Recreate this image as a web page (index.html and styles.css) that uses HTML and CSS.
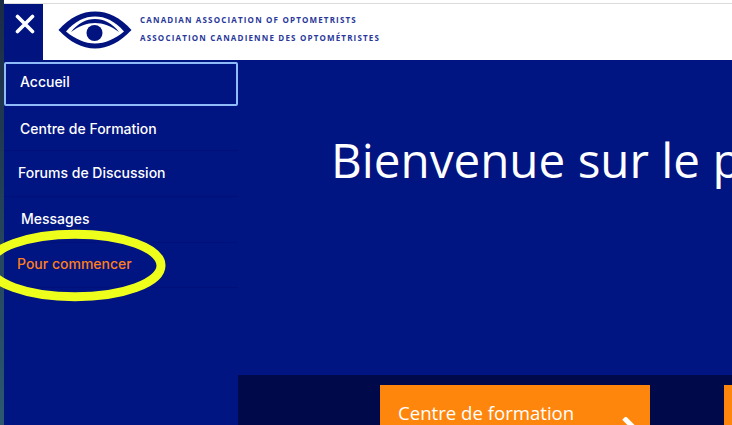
FILE: index.html
```html
<!DOCTYPE html>
<html lang="fr">
<head>
<meta charset="utf-8">
<title>Bienvenue</title>
<link rel="stylesheet" href="styles.css">
</head>
<body>
<div class="strip"></div>
<div class="app">
  <div class="topline"></div>
  <header class="header">
    <button class="close" aria-label="Fermer">
      <svg width="20" height="20" viewBox="0 0 20 20"><path d="M2.5 2.5 17.5 17.5M17.5 2.5 2.5 17.5" stroke="#fff" stroke-width="3.6" stroke-linecap="round" fill="none"/></svg>
    </button>
    <div class="brand">
      <svg class="eye" width="74" height="38" viewBox="0 0 74 38">
        <path d="M0.5 19 C12 6 24 0.5 37 0.5 C50 0.5 62 6 73.5 19 C62 31 50 37.5 37 37.5 C24 37.5 12 31 0.5 19Z" fill="#00137f"/>
        <path d="M8 20.5 C17 10 27 5.5 37 5.5 C47 5.5 57 10 66 20.5 C57 28 47 32.5 37 32.5 C27 32.5 17 28 8 20.5Z" fill="#fff"/>
        <path d="M13 21 C20 12 28 8 37 8 C46 8 54 12 61 21 C53 15 45 12 37 12 C29 12 21 15 13 21Z" fill="#00137f"/>
        <circle cx="36.5" cy="22" r="8" fill="#00137f"/>
      </svg>
      <div class="brand-text">
        <div>CANADIAN ASSOCIATION OF OPTOMETRISTS</div>
        <div>ASSOCIATION CANADIENNE DES OPTOMÉTRISTES</div>
      </div>
    </div>
  </header>
  <div class="main">
    <nav class="nav">
      <a class="item current">Accueil</a>
      <a class="item i2">Centre de Formation</a>
      <a class="item i3">Forums de Discussion</a>
      <a class="item i4">Messages</a>
      <a class="item i5 orange">Pour commencer</a>
      <svg class="ring" width="170" height="80" viewBox="0 0 170 80"><ellipse cx="75" cy="38.5" rx="86" ry="31.3" fill="none" stroke="#eeff1c" stroke-width="9"/></svg>
    </nav>
    <section class="content">
      <h1 class="welcome">Bienvenue sur le portail</h1>
      <div class="band">
        <div class="card">
          <span>Centre de formation</span>
          <svg class="chev" width="20" height="20" viewBox="0 0 20 20"><path d="M2 1 14 13" stroke="#fff" stroke-width="5" fill="none"/></svg>
        </div>
        <div class="card next"></div>
      </div>
    </section>
  </div>
</div>
</body>
</html>
```
FILE: styles.css
```css
* { box-sizing: border-box; }
html, body { margin: 0; height: 100%; overflow: hidden; }
body { display: flex; width: 732px; height: 425px; background: #001482; }
.strip { width: 4px; flex: none; background: linear-gradient(#1b2c45, #2b5870); }
.app { flex: 1; min-width: 0; display: flex; flex-direction: column; }
.topline { height: 4px; flex: none; background: #fff; border-bottom: 1px solid #dcdcdc; }
.header { height: 56px; flex: none; display: flex; background: #fff; }
.close { width: 39px; height: 56px; flex: none; border: 0; padding: 0 0 16px 2px; background: #00137f; display: flex; align-items: center; justify-content: center; }
.brand { display: flex; align-items: flex-start; padding: 7px 0 0 15px; }
.eye { flex: none; }
.brand-text { margin: 0 0 0 8px; font: 700 8px/18px "Open Sans", sans-serif; letter-spacing: 1.17px; color: #29389a; white-space: nowrap; }
.main { flex: 1; min-height: 0; display: flex; }
.nav { width: 234px; flex: none; position: relative; padding-top: 2px; display: flex; flex-direction: column; }
.item { display: flex; align-items: center; height: 46px; font: 500 14px/18px Inter, sans-serif; color: #fff; border-bottom: 1px solid #00107a; white-space: nowrap; }
.current { height: 44px; border: 2px solid #8fbcf8; border-radius: 2px; padding: 0 0 5px 14px; margin-bottom: 1px; }
.i2 { height: 44px; padding-left: 16px; }
.i3 { padding: 0 0 1px 14px; }
.i4 { padding: 0 0 2px 17px; }
.i5 { height: 45px; padding: 0 0 3px 13px; }
.orange { color: #ff7f1a; }
.ring { position: absolute; left: -4px; top: 167px; }
.content { flex: 1; min-width: 0; display: flex; flex-direction: column; overflow: hidden; }
.welcome { margin: 72px 0 0 93px; font: 400 47.6px/56px "Open Sans", sans-serif; color: #fff; white-space: nowrap; }
.band { margin-top: auto; height: 50px; flex: none; background: #000a4a; display: flex; padding: 10px 0 0 142px; gap: 74px; overflow: hidden; }
.card { width: 270px; height: 80px; flex: none; background: #ff860d; position: relative; color: #fff; font: 400 18.6px/24px "Open Sans", sans-serif; padding: 16px 0 0 18px; white-space: nowrap; }
.chev { position: absolute; left: 242px; top: 32px; }
.next { width: 40px; }
```
